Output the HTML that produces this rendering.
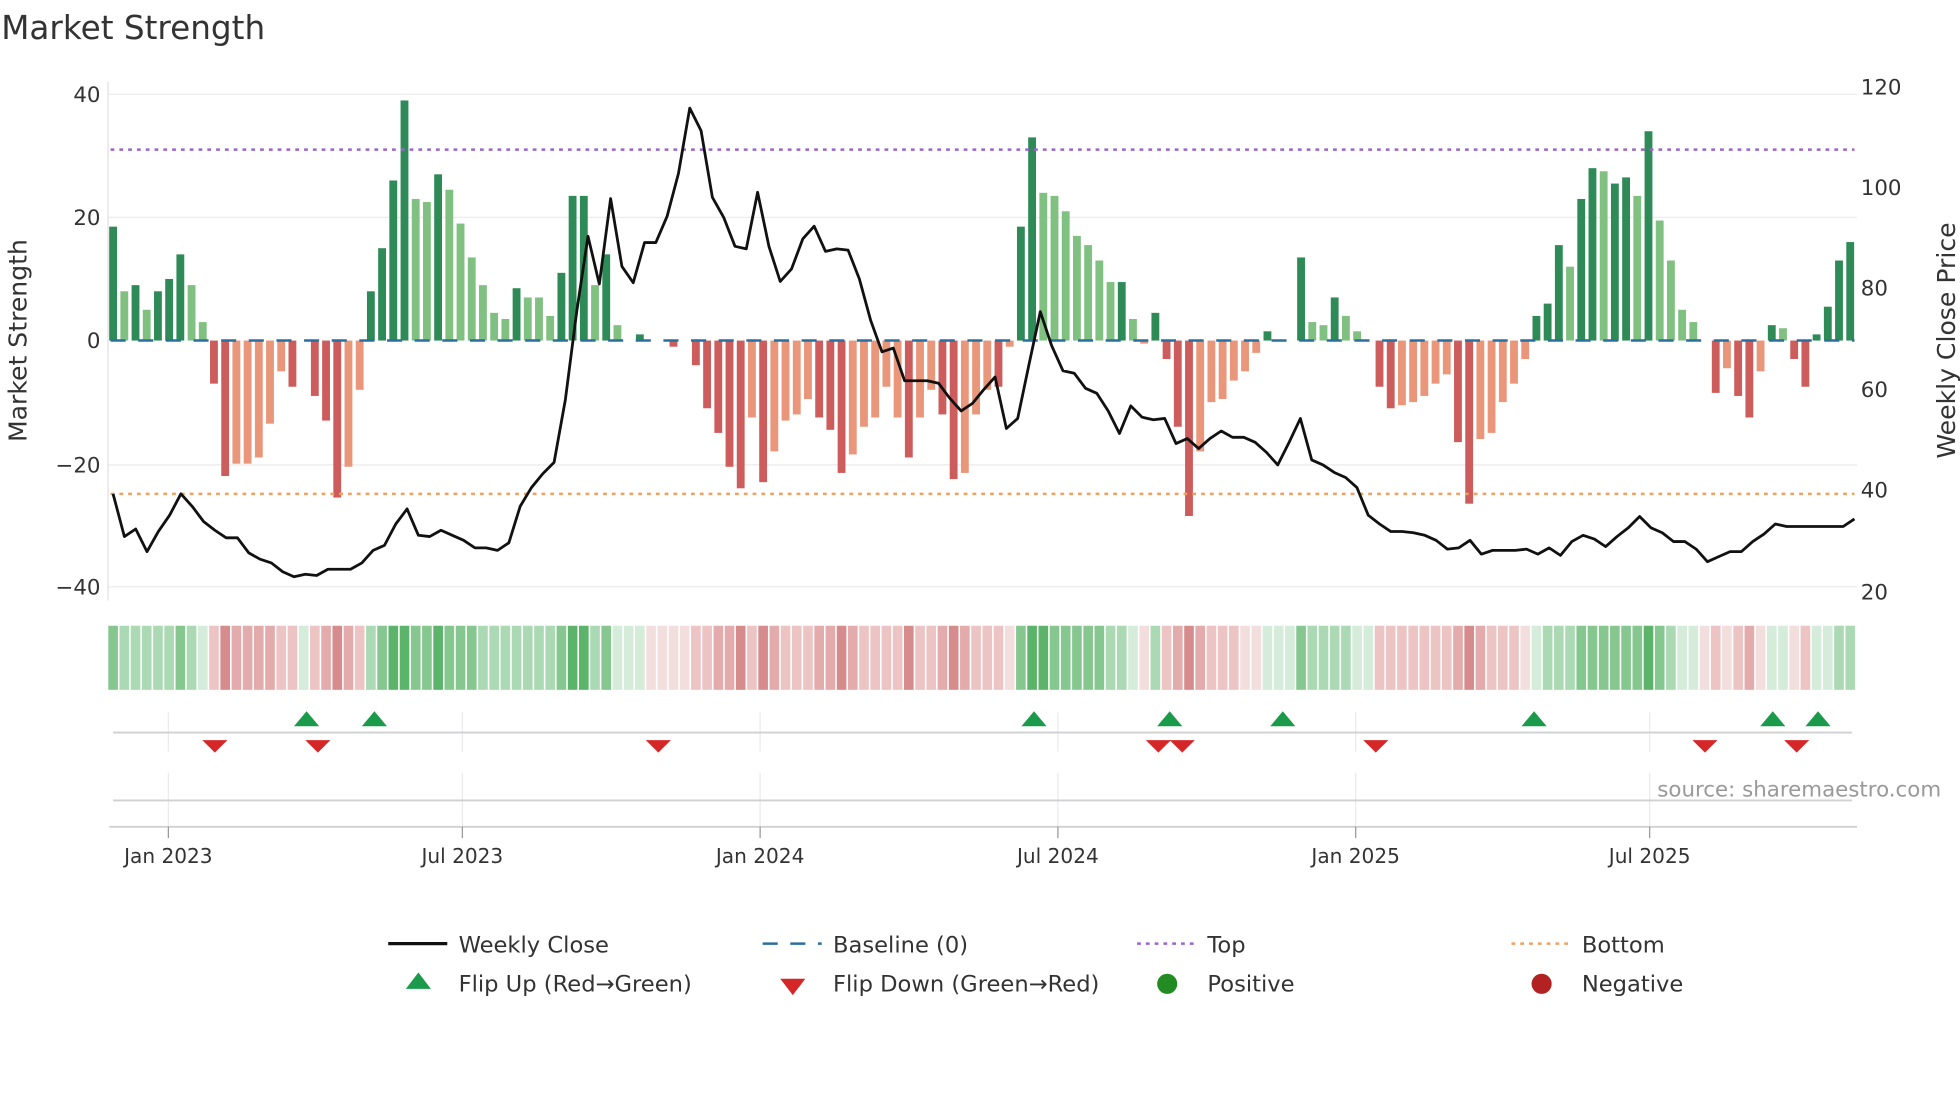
<!DOCTYPE html>
<html><head><meta charset="utf-8"><style>
html,body{margin:0;padding:0;background:#fff;}
svg{display:block;font-family:"DejaVu Sans","Liberation Sans",sans-serif;}
.G{fill:#2e8b57}.g{fill:#80c080}.R{fill:#cd5c5c}.r{fill:#e9967a}
.a1{fill:#d4ecd9}.a2{fill:#abd9b3}.a3{fill:#86c790}.a4{fill:#5cb46a}
.b1{fill:#f3dede}.b2{fill:#ecc4c4}.b3{fill:#e3abab}.b4{fill:#d68c8c}
</style></head><body>
<svg width="1960" height="1102" viewBox="0 0 1560 877" xmlns="http://www.w3.org/2000/svg">
<rect width="1560" height="877" fill="#fff"/>
<text x="1" y="31" font-size="26" fill="#333">Market Strength</text>
<g stroke="#ececec" stroke-width="1">
<line x1="86" y1="75" x2="1478" y2="75"/><line x1="86" y1="173" x2="1478" y2="173"/>
<line x1="86" y1="370" x2="1478" y2="370"/><line x1="86" y1="467" x2="1478" y2="467"/>
</g>
<line x1="86" y1="65" x2="86" y2="478" stroke="#e0e0e0"/>
<g font-size="17" fill="#333" text-anchor="end">
<text x="80" y="81">40</text><text x="80" y="179">20</text><text x="80" y="277">0</text>
<text x="80" y="376">−20</text><text x="80" y="473">−40</text>
</g>
<g font-size="17" fill="#333">
<text x="1481" y="75">120</text><text x="1481" y="155">100</text><text x="1481" y="235">80</text>
<text x="1481" y="316">60</text><text x="1481" y="396">40</text><text x="1481" y="477">20</text>
</g>
<text transform="translate(21,271) rotate(-90)" font-size="20" fill="#333" text-anchor="middle">Market Strength</text>
<text transform="translate(1556,271) rotate(-90)" font-size="20" fill="#333" text-anchor="middle">Weekly Close Price</text>

<g transform="translate(86.9,271) scale(8.92,-4.9)">
<rect class="G" x="0" y="0" width="0.7" height="18.5"/>
<rect class="g" x="1" y="0" width="0.7" height="8"/>
<rect class="G" x="2" y="0" width="0.7" height="9"/>
<rect class="g" x="3" y="0" width="0.7" height="5"/>
<rect class="G" x="4" y="0" width="0.7" height="8"/>
<rect class="G" x="5" y="0" width="0.7" height="10"/>
<rect class="G" x="6" y="0" width="0.7" height="14"/>
<rect class="g" x="7" y="0" width="0.7" height="9"/>
<rect class="g" x="8" y="0" width="0.7" height="3"/>
<rect class="R" x="9" y="-7" width="0.7" height="7"/>
<rect class="R" x="10" y="-22" width="0.7" height="22"/>
<rect class="r" x="11" y="-20" width="0.7" height="20"/>
<rect class="r" x="12" y="-20" width="0.7" height="20"/>
<rect class="r" x="13" y="-19" width="0.7" height="19"/>
<rect class="r" x="14" y="-13.5" width="0.7" height="13.5"/>
<rect class="r" x="15" y="-5" width="0.7" height="5"/>
<rect class="R" x="16" y="-7.5" width="0.7" height="7.5"/>
<rect class="R" x="18" y="-9" width="0.7" height="9"/>
<rect class="R" x="19" y="-13" width="0.7" height="13"/>
<rect class="R" x="20" y="-25.5" width="0.7" height="25.5"/>
<rect class="r" x="21" y="-20.5" width="0.7" height="20.5"/>
<rect class="r" x="22" y="-8" width="0.7" height="8"/>
<rect class="G" x="23" y="0" width="0.7" height="8"/>
<rect class="G" x="24" y="0" width="0.7" height="15"/>
<rect class="G" x="25" y="0" width="0.7" height="26"/>
<rect class="G" x="26" y="0" width="0.7" height="39"/>
<rect class="g" x="27" y="0" width="0.7" height="23"/>
<rect class="g" x="28" y="0" width="0.7" height="22.5"/>
<rect class="G" x="29" y="0" width="0.7" height="27"/>
<rect class="g" x="30" y="0" width="0.7" height="24.5"/>
<rect class="g" x="31" y="0" width="0.7" height="19"/>
<rect class="g" x="32" y="0" width="0.7" height="13.5"/>
<rect class="g" x="33" y="0" width="0.7" height="9"/>
<rect class="g" x="34" y="0" width="0.7" height="4.5"/>
<rect class="g" x="35" y="0" width="0.7" height="3.5"/>
<rect class="G" x="36" y="0" width="0.7" height="8.5"/>
<rect class="g" x="37" y="0" width="0.7" height="7"/>
<rect class="g" x="38" y="0" width="0.7" height="7"/>
<rect class="g" x="39" y="0" width="0.7" height="4"/>
<rect class="G" x="40" y="0" width="0.7" height="11"/>
<rect class="G" x="41" y="0" width="0.7" height="23.5"/>
<rect class="G" x="42" y="0" width="0.7" height="23.5"/>
<rect class="g" x="43" y="0" width="0.7" height="9"/>
<rect class="G" x="44" y="0" width="0.7" height="14"/>
<rect class="g" x="45" y="0" width="0.7" height="2.5"/>
<rect class="G" x="47" y="0" width="0.7" height="1"/>
<rect class="R" x="50" y="-1" width="0.7" height="1"/>
<rect class="R" x="52" y="-4" width="0.7" height="4"/>
<rect class="R" x="53" y="-11" width="0.7" height="11"/>
<rect class="R" x="54" y="-15" width="0.7" height="15"/>
<rect class="R" x="55" y="-20.5" width="0.7" height="20.5"/>
<rect class="R" x="56" y="-24" width="0.7" height="24"/>
<rect class="r" x="57" y="-12.5" width="0.7" height="12.5"/>
<rect class="R" x="58" y="-23" width="0.7" height="23"/>
<rect class="r" x="59" y="-18" width="0.7" height="18"/>
<rect class="r" x="60" y="-13" width="0.7" height="13"/>
<rect class="r" x="61" y="-12" width="0.7" height="12"/>
<rect class="r" x="62" y="-9.5" width="0.7" height="9.5"/>
<rect class="R" x="63" y="-12.5" width="0.7" height="12.5"/>
<rect class="R" x="64" y="-14.5" width="0.7" height="14.5"/>
<rect class="R" x="65" y="-21.5" width="0.7" height="21.5"/>
<rect class="r" x="66" y="-18.5" width="0.7" height="18.5"/>
<rect class="r" x="67" y="-14" width="0.7" height="14"/>
<rect class="r" x="68" y="-12.5" width="0.7" height="12.5"/>
<rect class="r" x="69" y="-7.5" width="0.7" height="7.5"/>
<rect class="r" x="70" y="-12.5" width="0.7" height="12.5"/>
<rect class="R" x="71" y="-19" width="0.7" height="19"/>
<rect class="r" x="72" y="-12.5" width="0.7" height="12.5"/>
<rect class="r" x="73" y="-8" width="0.7" height="8"/>
<rect class="R" x="74" y="-12" width="0.7" height="12"/>
<rect class="R" x="75" y="-22.5" width="0.7" height="22.5"/>
<rect class="r" x="76" y="-21.5" width="0.7" height="21.5"/>
<rect class="r" x="77" y="-12" width="0.7" height="12"/>
<rect class="r" x="78" y="-8" width="0.7" height="8"/>
<rect class="R" x="79" y="-7.5" width="0.7" height="7.5"/>
<rect class="r" x="80" y="-1" width="0.7" height="1"/>
<rect class="G" x="81" y="0" width="0.7" height="18.5"/>
<rect class="G" x="82" y="0" width="0.7" height="33"/>
<rect class="g" x="83" y="0" width="0.7" height="24"/>
<rect class="g" x="84" y="0" width="0.7" height="23.5"/>
<rect class="g" x="85" y="0" width="0.7" height="21"/>
<rect class="g" x="86" y="0" width="0.7" height="17"/>
<rect class="g" x="87" y="0" width="0.7" height="15.5"/>
<rect class="g" x="88" y="0" width="0.7" height="13"/>
<rect class="g" x="89" y="0" width="0.7" height="9.5"/>
<rect class="G" x="90" y="0" width="0.7" height="9.5"/>
<rect class="g" x="91" y="0" width="0.7" height="3.5"/>
<rect class="r" x="92" y="-0.5" width="0.7" height="0.5"/>
<rect class="G" x="93" y="0" width="0.7" height="4.5"/>
<rect class="R" x="94" y="-3" width="0.7" height="3"/>
<rect class="R" x="95" y="-14" width="0.7" height="14"/>
<rect class="R" x="96" y="-28.5" width="0.7" height="28.5"/>
<rect class="r" x="97" y="-18" width="0.7" height="18"/>
<rect class="r" x="98" y="-10" width="0.7" height="10"/>
<rect class="r" x="99" y="-9.5" width="0.7" height="9.5"/>
<rect class="r" x="100" y="-6.5" width="0.7" height="6.5"/>
<rect class="r" x="101" y="-5" width="0.7" height="5"/>
<rect class="r" x="102" y="-2" width="0.7" height="2"/>
<rect class="G" x="103" y="0" width="0.7" height="1.5"/>
<rect class="G" x="106" y="0" width="0.7" height="13.5"/>
<rect class="g" x="107" y="0" width="0.7" height="3"/>
<rect class="g" x="108" y="0" width="0.7" height="2.5"/>
<rect class="G" x="109" y="0" width="0.7" height="7"/>
<rect class="g" x="110" y="0" width="0.7" height="4"/>
<rect class="g" x="111" y="0" width="0.7" height="1.5"/>
<rect class="R" x="113" y="-7.5" width="0.7" height="7.5"/>
<rect class="R" x="114" y="-11" width="0.7" height="11"/>
<rect class="r" x="115" y="-10.5" width="0.7" height="10.5"/>
<rect class="r" x="116" y="-10" width="0.7" height="10"/>
<rect class="r" x="117" y="-9" width="0.7" height="9"/>
<rect class="r" x="118" y="-7" width="0.7" height="7"/>
<rect class="r" x="119" y="-5.5" width="0.7" height="5.5"/>
<rect class="R" x="120" y="-16.5" width="0.7" height="16.5"/>
<rect class="R" x="121" y="-26.5" width="0.7" height="26.5"/>
<rect class="r" x="122" y="-16" width="0.7" height="16"/>
<rect class="r" x="123" y="-15" width="0.7" height="15"/>
<rect class="r" x="124" y="-10" width="0.7" height="10"/>
<rect class="r" x="125" y="-7" width="0.7" height="7"/>
<rect class="r" x="126" y="-3" width="0.7" height="3"/>
<rect class="G" x="127" y="0" width="0.7" height="4"/>
<rect class="G" x="128" y="0" width="0.7" height="6"/>
<rect class="G" x="129" y="0" width="0.7" height="15.5"/>
<rect class="g" x="130" y="0" width="0.7" height="12"/>
<rect class="G" x="131" y="0" width="0.7" height="23"/>
<rect class="G" x="132" y="0" width="0.7" height="28"/>
<rect class="g" x="133" y="0" width="0.7" height="27.5"/>
<rect class="G" x="134" y="0" width="0.7" height="25.5"/>
<rect class="G" x="135" y="0" width="0.7" height="26.5"/>
<rect class="g" x="136" y="0" width="0.7" height="23.5"/>
<rect class="G" x="137" y="0" width="0.7" height="34"/>
<rect class="g" x="138" y="0" width="0.7" height="19.5"/>
<rect class="g" x="139" y="0" width="0.7" height="13"/>
<rect class="g" x="140" y="0" width="0.7" height="5"/>
<rect class="g" x="141" y="0" width="0.7" height="3"/>
<rect class="R" x="143" y="-8.5" width="0.7" height="8.5"/>
<rect class="r" x="144" y="-4.5" width="0.7" height="4.5"/>
<rect class="R" x="145" y="-9" width="0.7" height="9"/>
<rect class="R" x="146" y="-12.5" width="0.7" height="12.5"/>
<rect class="r" x="147" y="-5" width="0.7" height="5"/>
<rect class="G" x="148" y="0" width="0.7" height="2.5"/>
<rect class="g" x="149" y="0" width="0.7" height="2"/>
<rect class="R" x="150" y="-3" width="0.7" height="3"/>
<rect class="R" x="151" y="-7.5" width="0.7" height="7.5"/>
<rect class="G" x="152" y="0" width="0.7" height="1"/>
<rect class="G" x="153" y="0" width="0.7" height="5.5"/>
<rect class="G" x="154" y="0" width="0.7" height="13"/>
<rect class="G" x="155" y="0" width="0.7" height="16"/>
</g>

<line x1="88" y1="271" x2="1476" y2="271" stroke="#2a6f9e" stroke-width="2" stroke-dasharray="12,10"/>
<line x1="88" y1="119" x2="1476" y2="119" stroke="#9966cc" stroke-width="2" stroke-dasharray="3,4"/>
<line x1="88" y1="393" x2="1476" y2="393" stroke="#f0a060" stroke-width="2" stroke-dasharray="3,4"/>

<g transform="translate(90,0) scale(9,1)">
<polyline fill="none" stroke="#111" stroke-width="2.8" stroke-linejoin="round" vector-effect="non-scaling-stroke" points="0,393 1,427 2,421 3,439 4,423 5,410 6,393 7,403 8,415 9,422 10,428 11,428 12,440 13,445 14,448 15,455 16,459 17,457 18,458 19,453 20,453 21,453 22,448 23,438 24,434 25,417 26,405 27,426 28,427 29,422 30,426 31,430 32,436 33,436 34,438 35,432 36,403 37,388 38,377 39,368 40,318 41,248 42,188 43,226 44,158 45,212 46,225 47,193 48,193 49,172 50,138 51,86 52,104 53,157 54,173 55,196 56,198 57,153 58,196 59,224 60,214 61,190 62,180 63,200 64,198 65,199 66,222 67,255 68,280 69,277 70,303 71,303 72,303 73,305 74,317 75,327 76,321 77,310 78,300 79,341 80,333 81,290 82,248 83,275 84,295 85,297 86,309 87,313 88,327 89,345 90,323 91,332 92,334 93,333 94,353 95,349 96,357 97,349 98,343 99,348 100,348 101,352 102,360 103,370 104,352 105,333 106,366 107,370 108,376 109,380 110,388 111,410 112,417 113,423 114,423 115,424 116,426 117,430 118,437 119,436 120,430 121,441 122,438 123,438 124,438 125,437 126,441 127,436 128,442 129,431 130,426 131,429 132,435 133,427 134,420 135,411 136,420 137,424 138,431 139,431 140,437 141,447 142,443 143,439 144,439 145,431 146,425 147,417 148,419 149,419 150,419 151,419 152,419 153,419 154,413"/>
</g>

<g transform="translate(86.2,498) scale(8.92,1)">
<rect class="a3" x="0" y="0" width="0.86" height="51"/><rect class="a2" x="1" y="0" width="0.86" height="51"/><rect class="a2" x="2" y="0" width="0.86" height="51"/><rect class="a2" x="3" y="0" width="0.86" height="51"/><rect class="a2" x="4" y="0" width="0.86" height="51"/><rect class="a2" x="5" y="0" width="0.86" height="51"/><rect class="a3" x="6" y="0" width="0.86" height="51"/><rect class="a2" x="7" y="0" width="0.86" height="51"/><rect class="a1" x="8" y="0" width="0.86" height="51"/>
<rect class="b2" x="9" y="0" width="0.86" height="51"/><rect class="b4" x="10" y="0" width="0.86" height="51"/><rect class="b3" x="11" y="0" width="0.86" height="51"/><rect class="b3" x="12" y="0" width="0.86" height="51"/><rect class="b3" x="13" y="0" width="0.86" height="51"/><rect class="b3" x="14" y="0" width="0.86" height="51"/><rect class="b2" x="15" y="0" width="0.86" height="51"/><rect class="b2" x="16" y="0" width="0.86" height="51"/><rect class="a1" x="17" y="0" width="0.86" height="51"/><rect class="b2" x="18" y="0" width="0.86" height="51"/><rect class="b3" x="19" y="0" width="0.86" height="51"/><rect class="b4" x="20" y="0" width="0.86" height="51"/><rect class="b3" x="21" y="0" width="0.86" height="51"/><rect class="b2" x="22" y="0" width="0.86" height="51"/>
<rect class="a2" x="23" y="0" width="0.86" height="51"/><rect class="a3" x="24" y="0" width="0.86" height="51"/><rect class="a4" x="25" y="0" width="0.86" height="51"/><rect class="a4" x="26" y="0" width="0.86" height="51"/><rect class="a3" x="27" y="0" width="0.86" height="51"/><rect class="a3" x="28" y="0" width="0.86" height="51"/><rect class="a4" x="29" y="0" width="0.86" height="51"/><rect class="a3" x="30" y="0" width="0.86" height="51"/><rect class="a3" x="31" y="0" width="0.86" height="51"/><rect class="a3" x="32" y="0" width="0.86" height="51"/><rect class="a2" x="33" y="0" width="0.86" height="51"/><rect class="a2" x="34" y="0" width="0.86" height="51"/><rect class="a2" x="35" y="0" width="0.86" height="51"/><rect class="a2" x="36" y="0" width="0.86" height="51"/><rect class="a2" x="37" y="0" width="0.86" height="51"/><rect class="a2" x="38" y="0" width="0.86" height="51"/><rect class="a2" x="39" y="0" width="0.86" height="51"/><rect class="a3" x="40" y="0" width="0.86" height="51"/><rect class="a4" x="41" y="0" width="0.86" height="51"/><rect class="a4" x="42" y="0" width="0.86" height="51"/><rect class="a2" x="43" y="0" width="0.86" height="51"/><rect class="a3" x="44" y="0" width="0.86" height="51"/><rect class="a1" x="45" y="0" width="0.86" height="51"/><rect class="a1" x="46" y="0" width="0.86" height="51"/><rect class="a1" x="47" y="0" width="0.86" height="51"/>
<rect class="b1" x="48" y="0" width="0.86" height="51"/><rect class="b1" x="49" y="0" width="0.86" height="51"/><rect class="b1" x="50" y="0" width="0.86" height="51"/><rect class="b1" x="51" y="0" width="0.86" height="51"/><rect class="b2" x="52" y="0" width="0.86" height="51"/><rect class="b2" x="53" y="0" width="0.86" height="51"/><rect class="b3" x="54" y="0" width="0.86" height="51"/><rect class="b3" x="55" y="0" width="0.86" height="51"/><rect class="b4" x="56" y="0" width="0.86" height="51"/><rect class="b2" x="57" y="0" width="0.86" height="51"/><rect class="b4" x="58" y="0" width="0.86" height="51"/><rect class="b3" x="59" y="0" width="0.86" height="51"/><rect class="b2" x="60" y="0" width="0.86" height="51"/><rect class="b2" x="61" y="0" width="0.86" height="51"/><rect class="b2" x="62" y="0" width="0.86" height="51"/><rect class="b3" x="63" y="0" width="0.86" height="51"/><rect class="b3" x="64" y="0" width="0.86" height="51"/><rect class="b4" x="65" y="0" width="0.86" height="51"/><rect class="b3" x="66" y="0" width="0.86" height="51"/><rect class="b2" x="67" y="0" width="0.86" height="51"/><rect class="b2" x="68" y="0" width="0.86" height="51"/><rect class="b2" x="69" y="0" width="0.86" height="51"/><rect class="b2" x="70" y="0" width="0.86" height="51"/><rect class="b4" x="71" y="0" width="0.86" height="51"/><rect class="b2" x="72" y="0" width="0.86" height="51"/><rect class="b2" x="73" y="0" width="0.86" height="51"/><rect class="b3" x="74" y="0" width="0.86" height="51"/><rect class="b4" x="75" y="0" width="0.86" height="51"/><rect class="b3" x="76" y="0" width="0.86" height="51"/><rect class="b2" x="77" y="0" width="0.86" height="51"/><rect class="b2" x="78" y="0" width="0.86" height="51"/><rect class="b2" x="79" y="0" width="0.86" height="51"/><rect class="b1" x="80" y="0" width="0.86" height="51"/>
<rect class="a3" x="81" y="0" width="0.86" height="51"/><rect class="a4" x="82" y="0" width="0.86" height="51"/><rect class="a4" x="83" y="0" width="0.86" height="51"/><rect class="a3" x="84" y="0" width="0.86" height="51"/><rect class="a3" x="85" y="0" width="0.86" height="51"/><rect class="a3" x="86" y="0" width="0.86" height="51"/><rect class="a3" x="87" y="0" width="0.86" height="51"/><rect class="a3" x="88" y="0" width="0.86" height="51"/><rect class="a2" x="89" y="0" width="0.86" height="51"/><rect class="a2" x="90" y="0" width="0.86" height="51"/><rect class="a1" x="91" y="0" width="0.86" height="51"/><rect class="b1" x="92" y="0" width="0.86" height="51"/><rect class="a2" x="93" y="0" width="0.86" height="51"/>
<rect class="b2" x="94" y="0" width="0.86" height="51"/><rect class="b3" x="95" y="0" width="0.86" height="51"/><rect class="b4" x="96" y="0" width="0.86" height="51"/><rect class="b3" x="97" y="0" width="0.86" height="51"/><rect class="b2" x="98" y="0" width="0.86" height="51"/><rect class="b2" x="99" y="0" width="0.86" height="51"/><rect class="b2" x="100" y="0" width="0.86" height="51"/><rect class="b1" x="101" y="0" width="0.86" height="51"/><rect class="b1" x="102" y="0" width="0.86" height="51"/>
<rect class="a1" x="103" y="0" width="0.86" height="51"/><rect class="a1" x="104" y="0" width="0.86" height="51"/><rect class="a1" x="105" y="0" width="0.86" height="51"/><rect class="a3" x="106" y="0" width="0.86" height="51"/><rect class="a2" x="107" y="0" width="0.86" height="51"/><rect class="a2" x="108" y="0" width="0.86" height="51"/><rect class="a2" x="109" y="0" width="0.86" height="51"/><rect class="a2" x="110" y="0" width="0.86" height="51"/><rect class="a1" x="111" y="0" width="0.86" height="51"/><rect class="a1" x="112" y="0" width="0.86" height="51"/>
<rect class="b2" x="113" y="0" width="0.86" height="51"/><rect class="b2" x="114" y="0" width="0.86" height="51"/><rect class="b2" x="115" y="0" width="0.86" height="51"/><rect class="b2" x="116" y="0" width="0.86" height="51"/><rect class="b2" x="117" y="0" width="0.86" height="51"/><rect class="b2" x="118" y="0" width="0.86" height="51"/><rect class="b2" x="119" y="0" width="0.86" height="51"/><rect class="b3" x="120" y="0" width="0.86" height="51"/><rect class="b4" x="121" y="0" width="0.86" height="51"/><rect class="b3" x="122" y="0" width="0.86" height="51"/><rect class="b2" x="123" y="0" width="0.86" height="51"/><rect class="b2" x="124" y="0" width="0.86" height="51"/><rect class="b2" x="125" y="0" width="0.86" height="51"/><rect class="b1" x="126" y="0" width="0.86" height="51"/>
<rect class="a1" x="127" y="0" width="0.86" height="51"/><rect class="a2" x="128" y="0" width="0.86" height="51"/><rect class="a2" x="129" y="0" width="0.86" height="51"/><rect class="a2" x="130" y="0" width="0.86" height="51"/><rect class="a3" x="131" y="0" width="0.86" height="51"/><rect class="a3" x="132" y="0" width="0.86" height="51"/><rect class="a3" x="133" y="0" width="0.86" height="51"/><rect class="a3" x="134" y="0" width="0.86" height="51"/><rect class="a3" x="135" y="0" width="0.86" height="51"/><rect class="a3" x="136" y="0" width="0.86" height="51"/><rect class="a4" x="137" y="0" width="0.86" height="51"/><rect class="a3" x="138" y="0" width="0.86" height="51"/><rect class="a2" x="139" y="0" width="0.86" height="51"/><rect class="a1" x="140" y="0" width="0.86" height="51"/><rect class="a1" x="141" y="0" width="0.86" height="51"/>
<rect class="b1" x="142" y="0" width="0.86" height="51"/><rect class="b2" x="143" y="0" width="0.86" height="51"/><rect class="b1" x="144" y="0" width="0.86" height="51"/><rect class="b2" x="145" y="0" width="0.86" height="51"/><rect class="b3" x="146" y="0" width="0.86" height="51"/><rect class="b1" x="147" y="0" width="0.86" height="51"/>
<rect class="a1" x="148" y="0" width="0.86" height="51"/><rect class="a1" x="149" y="0" width="0.86" height="51"/><rect class="b1" x="150" y="0" width="0.86" height="51"/><rect class="b2" x="151" y="0" width="0.86" height="51"/><rect class="a1" x="152" y="0" width="0.86" height="51"/><rect class="a1" x="153" y="0" width="0.86" height="51"/><rect class="a2" x="154" y="0" width="0.86" height="51"/><rect class="a2" x="155" y="0" width="0.86" height="51"/>
</g>

<g stroke="#eaeaf0"><line x1="134" y1="567" x2="134" y2="598"/><line x1="368" y1="567" x2="368" y2="598"/><line x1="605" y1="567" x2="605" y2="598"/><line x1="842" y1="567" x2="842" y2="598"/><line x1="1079" y1="567" x2="1079" y2="598"/><line x1="1313" y1="567" x2="1313" y2="598"/>
<line x1="134" y1="615" x2="134" y2="658"/><line x1="368" y1="615" x2="368" y2="658"/><line x1="605" y1="615" x2="605" y2="658"/><line x1="842" y1="615" x2="842" y2="658"/><line x1="1079" y1="615" x2="1079" y2="658"/><line x1="1313" y1="615" x2="1313" y2="658"/></g>
<line x1="90" y1="583" x2="1474" y2="583" stroke="#d0d0d0" stroke-width="1.5"/>
<line x1="90" y1="637" x2="1474" y2="637" stroke="#d0d0d0" stroke-width="1.5"/>
<line x1="87" y1="658" x2="1478" y2="658" stroke="#d0d0d0" stroke-width="1.5"/>
<g stroke="#999"><line x1="134" y1="658" x2="134" y2="667"/><line x1="368" y1="658" x2="368" y2="667"/><line x1="605" y1="658" x2="605" y2="667"/><line x1="842" y1="658" x2="842" y2="667"/><line x1="1079" y1="658" x2="1079" y2="667"/><line x1="1313" y1="658" x2="1313" y2="667"/></g>
<g fill="#1a9a4a">
<polygon points="234,578 254,578 244,566"/><polygon points="288,578 308,578 298,566"/><polygon points="813,578 833,578 823,566"/><polygon points="921,578 941,578 931,566"/><polygon points="1011,578 1031,578 1021,566"/><polygon points="1211,578 1231,578 1221,566"/><polygon points="1401,578 1421,578 1411,566"/><polygon points="1437,578 1457,578 1447,566"/>
</g>
<g fill="#d62728">
<polygon points="161,589 181,589 171,599"/><polygon points="243,589 263,589 253,599"/><polygon points="514,589 534,589 524,599"/><polygon points="912,589 932,589 922,599"/><polygon points="931,589 951,589 941,599"/><polygon points="1085,589 1105,589 1095,599"/><polygon points="1347,589 1367,589 1357,599"/><polygon points="1420,589 1440,589 1430,599"/>
</g>
<text x="1545" y="634" font-size="17" fill="#999" text-anchor="end">source: sharemaestro.com</text>
<g font-size="16" fill="#333" text-anchor="middle">
<text x="134" y="687">Jan 2023</text><text x="368" y="687">Jul 2023</text><text x="605" y="687">Jan 2024</text>
<text x="842" y="687">Jul 2024</text><text x="1079" y="687">Jan 2025</text><text x="1313" y="687">Jul 2025</text>
</g>
<g font-size="18" fill="#333">
<line x1="309" y1="751" x2="356" y2="751" stroke="#111" stroke-width="2.5"/><text x="365" y="758">Weekly Close</text>
<line x1="607" y1="751" x2="654" y2="751" stroke="#2a6f9e" stroke-width="2" stroke-dasharray="12,10"/><text x="663" y="758">Baseline (0)</text>
<line x1="905" y1="751" x2="952" y2="751" stroke="#9966cc" stroke-width="2" stroke-dasharray="3,4"/><text x="961" y="758">Top</text>
<line x1="1203" y1="751" x2="1250" y2="751" stroke="#f0a060" stroke-width="2" stroke-dasharray="3,4"/><text x="1259" y="758">Bottom</text>
<polygon points="323,787 343,787 333,774" fill="#1a9a4a"/><text x="365" y="789">Flip Up (Red→Green)</text>
<polygon points="621,779 641,779 631,792" fill="#d62728"/><text x="663" y="789">Flip Down (Green→Red)</text>
<circle cx="929" cy="783" r="8" fill="#228b22"/><text x="961" y="789">Positive</text>
<circle cx="1227" cy="783" r="8" fill="#b22222"/><text x="1259" y="789">Negative</text>
</g>
</svg>
</body></html>
